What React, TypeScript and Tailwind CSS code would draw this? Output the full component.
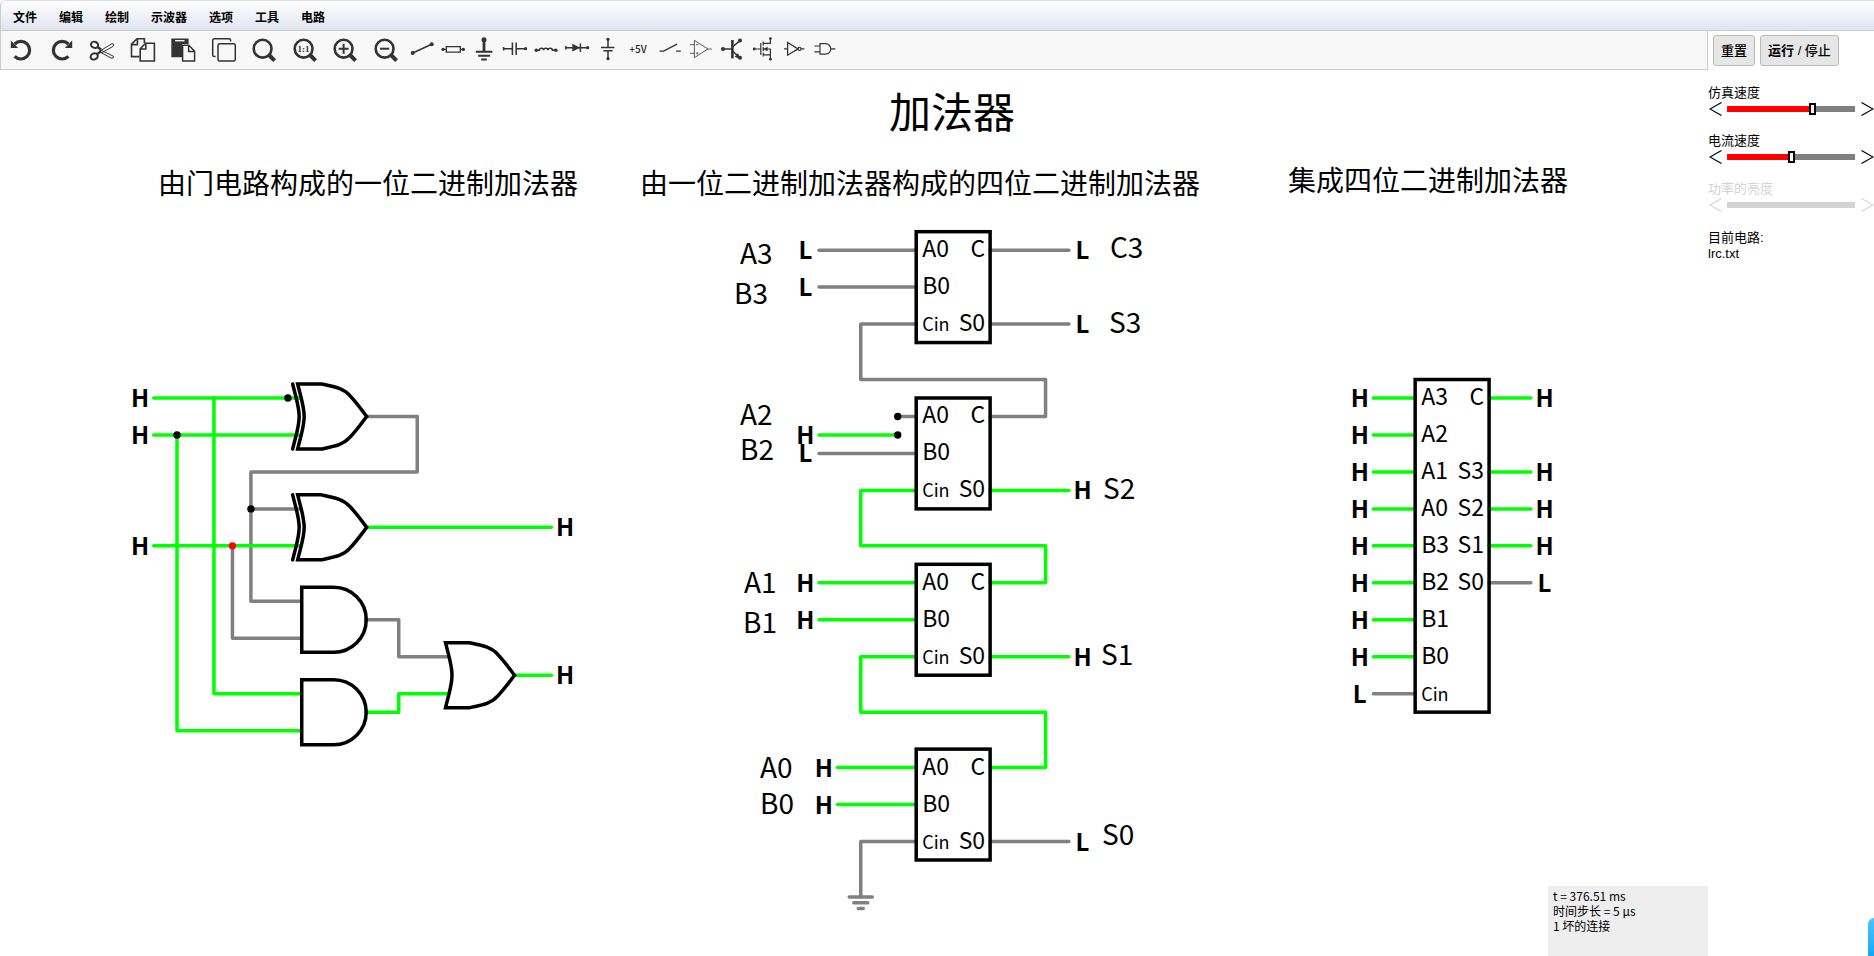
import { useState, type ReactNode } from "react";

const ON = "#00ff00";
const OFF = "#808080";

// grid position -> canvas pixels
const STEP = 18.48;
const gx = (i: number) => 177 + i * STEP;
const gy = (j: number) => 328 + j * STEP;

type Pt = [number, number];

const MENUS = ["文件", "编辑", "绘制", "示波器", "选项", "工具", "电路"];

function Icon({ children }: { children: ReactNode }) {
  return (
    <svg
      width="24"
      height="24"
      viewBox="0 0 24 24"
      className="overflow-visible"
      fill="none"
      stroke="#333333"
      strokeWidth="1.5"
    >
      {children}
    </svg>
  );
}

const Dot = ({ x, y, r = 1.8 }: { x: number; y: number; r?: number }) => (
  <circle cx={x} cy={y} r={r} fill="#333333" stroke="none" />
);

const Lens = () => (
  <>
    <circle cx="10.6" cy="10.7" r="8.9" strokeWidth="2.6" />
    <path d="M17 17L22.6 22.6" strokeWidth="4" />
  </>
);

const EDIT_TOOLS: { name: string; icon: ReactNode }[] = [
  {
    name: "撤销",
    icon: (
      <>
        <path d="M5.6 6A8.8 8.8 0 1 1 5.6 18.4" strokeWidth="3.2" />
        <path d="M1.8 2.5V10H9.2Z" fill="#333333" stroke="none" />
      </>
    ),
  },
  {
    name: "重做",
    icon: (
      <>
        <path d="M18.4 6A8.8 8.8 0 1 0 18.4 18.4" strokeWidth="3.2" />
        <path d="M22.2 2.5V10H14.8Z" fill="#333333" stroke="none" />
      </>
    ),
  },
  {
    name: "剪切",
    icon: (
      <>
        <ellipse cx="4.6" cy="6.8" rx="3.7" ry="3" strokeWidth="2" transform="rotate(20 4.6 6.8)" />
        <ellipse cx="4.2" cy="18.4" rx="3.7" ry="3" strokeWidth="2" transform="rotate(-25 4.2 18.4)" />
        <path d="M7.6 9L11 11.5M7 16L11 13.5" strokeWidth="2.4" />
        <path d="M10 13L22 5.6L24 6.4L23 8.4L12 14.6ZM10 11.6L23.6 18.4L23 20L21 20L10 14Z" strokeWidth="1" />
      </>
    ),
  },
  {
    name: "复制",
    icon: (
      <>
        <path d="M8.5 18.6H.5V6.2L6 .7H13.4V5M6.4 .7V6.6H.5" strokeWidth="1.6" />
        <path d="M9.2 10.8L14.6 5.2H23.4V23H9.2ZM14.8 5.2V11H9.2" strokeWidth="1.6" />
      </>
    ),
  },
  {
    name: "粘贴",
    icon: (
      <>
        <path d="M.3 .5H17.6V6H11V19.3H.3Z" fill="#333333" stroke="none" />
        <path d="M4 2.7H13.5" stroke="#f8f8f8" strokeWidth="1.4" />
        <path d="M11.6 7.2H17.8L23.6 13.2V23.1H11.6ZM17.6 7.2V13.4H23.6" fill="#f8f8f8" />
      </>
    ),
  },
  {
    name: "副本",
    icon: (
      <>
        <path d="M3.6 18.6H2.3A1.6 1.6 0 0 1 .7 17V2.3A1.6 1.6 0 0 1 2.3 .7H17A1.6 1.6 0 0 1 18.6 2.3V3.4" />
        <rect x="6" y="5.8" width="17.3" height="17.3" rx="1.6" />
      </>
    ),
  },
  { name: "搜索", icon: <Lens /> },
  {
    name: "1:1",
    icon: (
      <>
        <Lens />
        <text
          x="10.6"
          y="14"
          textAnchor="middle"
          fill="#333333"
          stroke="none"
          className="font-['Liberation_Serif',serif] text-[9px] font-bold"
        >
          1:1
        </text>
      </>
    ),
  },
  {
    name: "放大",
    icon: (
      <>
        <Lens />
        <path d="M5.6 10.7H15.6M10.6 5.7V15.7" strokeWidth="2" />
      </>
    ),
  },
  {
    name: "缩小",
    icon: (
      <>
        <Lens />
        <path d="M6 10.7H15.2" strokeWidth="2" />
      </>
    ),
  },
];

const PART_TOOLS: { name: string; icon: ReactNode }[] = [
  {
    name: "导线",
    icon: (
      <>
        <path d="M2.7 15L21.7 6.3" />
        <Dot x={2.7} y={15} r={2} />
        <Dot x={21.7} y={6.3} r={2} />
      </>
    ),
  },
  {
    name: "电阻",
    icon: (
      <>
        <path d="M2 11.4H5.3M19.3 11.4H22.6M5.3 8.6H19.3V14.2H5.3Z" strokeWidth="1.3" />
        <Dot x={2} y={11.4} r={1.6} />
        <Dot x={22.4} y={11.4} r={1.6} />
      </>
    ),
  },
  {
    name: "接地",
    icon: (
      <>
        <path d="M12 2V13.6" strokeWidth="2.8" />
        <path d="M3.8 13.7H20.4M6.2 17.8H18M9.2 21.4H14.8" strokeWidth="2" />
        <Dot x={12} y={1.8} r={2.5} />
      </>
    ),
  },
  {
    name: "电容",
    icon: (
      <>
        <path d="M.5 10.7H9.4M13.2 10.7H22.6M9.4 4.4V17M13.2 4.4V17M.6 9V12.4" />
        <Dot x={22.6} y={10.7} r={1.6} />
      </>
    ),
  },
  {
    name: "电感",
    icon: (
      <>
        <path d="M2.3 12.3H5.4C5.4 9.6 9.6 9.6 9.6 12.3C9.6 9.6 14 9.6 14 12.3C14 9.6 18.4 9.6 18.4 12.3H21.6" />
        <Dot x={2.3} y={12.3} r={1.8} />
        <Dot x={21.8} y={12.3} r={1.8} />
      </>
    ),
  },
  {
    name: "二极管",
    icon: (
      <>
        <path d="M.8 9.7H22.6M15.4 5.4V14M.9 8V11.4" />
        <path d="M7.3 5.8L15.3 9.7L7.3 13.6Z" fill="#333333" stroke="none" />
        <Dot x={22.7} y={9.7} r={1.6} />
      </>
    ),
  },
  {
    name: "电池",
    icon: (
      <>
        <path d="M12 1.3V9.6M12 12.7V20.7M5 9.6H18.4M7.4 12.7H16.6" />
        <Dot x={12} y={1.3} r={1.6} />
        <Dot x={12} y={20.7} r={1.6} />
      </>
    ),
  },
  {
    name: "+5V",
    icon: (
      <text x="11" y="15" textAnchor="middle" fill="#222222" stroke="none" className="text-[10px] font-medium">
        +5V
      </text>
    ),
  },
  { name: "开关", icon: <path d="M1.6 13.2H5.6L19 6.2M18.2 13.2H22.8" strokeWidth="1.3" /> },
  {
    name: "运放",
    icon: (
      <>
        <path d="M5.4 2.3V19.7L18.8 11ZM18.8 11H22.8M1 6.7H5.4M1 15.3H5.4M7 6.7H9.4" strokeWidth=".8" />
        <path d="M7 15.3H9.4M8.2 14.1V16.5" strokeWidth=".8" stroke="#8a4a30" />
      </>
    ),
  },
  {
    name: "晶体管",
    icon: (
      <>
        <path d="M3 11H12.4" />
        <path d="M12.4 2V20.4" strokeWidth="2.6" />
        <path d="M12.4 9L20 2.6M12.4 13L20 19.6" />
        <path d="M20.8 21.4L14.6 18.8L18 15.2Z" fill="#333333" stroke="none" />
        <Dot x={3} y={11} r={2} />
        <Dot x={20} y={2.4} r={2} />
        <Dot x={20} y={19.8} r={2} />
      </>
    ),
  },
  {
    name: "场效应管",
    icon: (
      <>
        <path d="M3.7 11H9.8M9.8 5V17M12.2 3.6V7.6M12.2 9V13M12.2 14.6V18.6M12.2 5.4H19.4V.6M12.2 11H19.4V21.2M12.2 16.8H19.4" strokeWidth="1.2" />
        <path d="M12.4 11L16.6 8.8V13.2Z" fill="#333333" stroke="none" />
        <Dot x={3.2} y={11} r={1.4} />
        <Dot x={19.4} y={0.6} r={1.4} />
        <Dot x={19.4} y={21.2} r={1.4} />
      </>
    ),
  },
  {
    name: "反相器",
    icon: (
      <>
        <path d="M5.6 4.4V17.2L16 10.9ZM2 10.9H5.6M19 10.9H22.4" strokeWidth="1.3" />
        <circle cx="17.5" cy="10.9" r="1.5" strokeWidth="1.2" />
      </>
    ),
  },
  {
    name: "与门",
    icon: <path d="M7 5.7H12.6A5.2 5.2 0 0 1 12.6 16.1H7ZM17.8 10.9H22.4M1.4 8H7M1.4 13.8H7" strokeWidth="1.2" />,
  },
];

function Wire({ pts, on = false }: { pts: Pt[]; on?: boolean }) {
  return (
    <polyline
      points={pts.map(([i, j]) => `${gx(i)},${gy(j)}`).join(" ")}
      fill="none"
      stroke={on ? ON : OFF}
      strokeWidth="3.5"
      strokeLinecap="round"
      strokeLinejoin="round"
    />
  );
}

const Node = ({ i, j, bad }: { i: number; j: number; bad?: boolean }) => (
  <circle cx={gx(i)} cy={gy(j)} r="3.7" fill={bad ? "#ff0000" : "#000000"} />
);

function Level({ i, j, v }: { i: number; j: number; v: "H" | "L" }) {
  return (
    <text x={gx(i)} y={gy(j) + 9} textAnchor="middle" className="text-[24px] font-bold">
      {v}
    </text>
  );
}

// logic input or output: letter plus the lead that runs to the grid column `to`
function Terminal({ i, j, v, to }: { i: number; j: number; v: "H" | "L"; to: number }) {
  const gap = to > i ? 0.74 : -0.74;
  return (
    <>
      <Wire pts={[[i + gap, j], [to, j]]} on={v === "H"} />
      <Level i={i} j={j} v={v} />
    </>
  );
}

function OrGate({ i, j, xor }: { i: number; j: number; xor?: boolean }) {
  return (
    <g transform={`translate(${gx(i)} ${gy(j)})`} fill="none" stroke="#000000" strokeWidth="3.5">
      <path d="M0 -32.5H24C38 -29.5 46 -28 52 -21C58 -15 63 -8 69 0C63 8 58 15 52 21C46 28 38 29.5 24 32.5H0C3.5 18 6.5 10 6.5 0C6.5 -10 3.5 -18 0 -32.5Z" />
      {xor && <path d="M-5 -32.5C-1.5 -18 1.5 -10 1.5 0C1.5 10 -1.5 18 -5 32.5" strokeLinecap="round" />}
    </g>
  );
}

function AndGate({ i, j }: { i: number; j: number }) {
  return (
    <path
      transform={`translate(${gx(i)} ${gy(j)})`}
      d="M0 -32.5H32A32.5 32.5 0 0 1 32 32.5H0Z"
      fill="none"
      stroke="#000000"
      strokeWidth="3.5"
    />
  );
}

type Pin = [string, number];

function Chip({ i, j, rows, left, right }: { i: number; j: number; rows: number; left: Pin[]; right: Pin[] }) {
  const size = (s: string) => (s.length > 2 ? "text-[18px]" : "text-[23px]");
  return (
    <g>
      <rect x={gx(i)} y={gy(j)} width={4 * STEP} height={rows * STEP} fill="none" stroke="#000000" strokeWidth="3.5" />
      {left.map(([s, r]) => (
        <text key={s} x={gx(i) + 6} y={gy(j + r) + 7} className={size(s)}>
          {s}
        </text>
      ))}
      {right.map(([s, r]) => (
        <text key={s} x={gx(i + 4) - 5} y={gy(j + r) + 7} textAnchor="end" className={size(s)}>
          {s}
        </text>
      ))}
    </g>
  );
}

const LABELS: [string, number, number][] = [
  ["A3", 740, 194],
  ["B3", 734, 234],
  ["A2", 740, 355],
  ["B2", 740, 390],
  ["A1", 744, 523],
  ["B1", 743, 563],
  ["A0", 760, 708],
  ["B0", 760, 744],
  ["C3", 1110, 188],
  ["S3", 1109, 263],
  ["S2", 1103, 429],
  ["S1", 1101, 595],
  ["S0", 1102, 775],
];

function GateAdder() {
  return (
    <g>
      <Wire pts={[[13, 1], [13, 4], [4, 4], [4, 11], [6.7, 11]]} />
      <Wire pts={[[10.3, 1], [13, 1]]} />
      <Wire pts={[[4, 6], [6.6, 6]]} />
      <Wire pts={[[3, 8], [3, 13], [6.7, 13]]} />
      <Wire pts={[[10.2, 12], [12, 12], [12, 14], [14.7, 14]]} />
      <Wire on pts={[[2, 0], [2, 16], [6.7, 16]]} />
      <Wire on pts={[[0, 2], [0, 18], [6.7, 18]]} />
      <Wire on pts={[[10.2, 17], [12, 17], [12, 16], [14.7, 16]]} />
      <Terminal i={-2} j={0} v="H" to={6.7} />
      <Terminal i={-2} j={2} v="H" to={6.7} />
      <Terminal i={-2} j={8} v="H" to={6.7} />
      <Terminal i={21} j={7} v="H" to={10.3} />
      <Terminal i={21} j={15} v="H" to={18.3} />
      <OrGate i={6.53} j={1} xor />
      <OrGate i={6.53} j={7} xor />
      <AndGate i={6.75} j={12} />
      <AndGate i={6.75} j={17} />
      <OrGate i={14.53} j={15} />
      <Node i={6} j={0} />
      <Node i={0} j={2} />
      <Node i={4} j={6} />
      <Node i={3} j={8} bad />
    </g>
  );
}

function RippleAdder() {
  return (
    <g>
      <Terminal i={34} j={-8} v="L" to={40} />
      <Terminal i={34} j={-6} v="L" to={40} />
      <Terminal i={49} j={-8} v="L" to={44} />
      <Terminal i={49} j={-4} v="L" to={44} />
      <Wire pts={[[40, -4], [37, -4], [37, -1], [47, -1], [47, 1], [44, 1]]} />
      <Wire pts={[[39, 1], [40, 1]]} />
      <Terminal i={34} j={2} v="H" to={39} />
      <Terminal i={34} j={3} v="L" to={40} />
      <Node i={39} j={1} />
      <Node i={39} j={2} />
      <Terminal i={49} j={5} v="H" to={44} />
      <Wire on pts={[[40, 5], [37, 5], [37, 8], [47, 8], [47, 10], [44, 10]]} />
      <Terminal i={34} j={10} v="H" to={40} />
      <Terminal i={34} j={12} v="H" to={40} />
      <Terminal i={49} j={14} v="H" to={44} />
      <Wire on pts={[[40, 14], [37, 14], [37, 17], [47, 17], [47, 20], [44, 20]]} />
      <Terminal i={35} j={20} v="H" to={40} />
      <Terminal i={35} j={22} v="H" to={40} />
      <Terminal i={49} j={24} v="L" to={44} />
      <Wire pts={[[40, 24], [37, 24], [37, 27]]} />
      <path
        transform={`translate(${gx(37)} ${gy(27)})`}
        d="M-11.5 0H11.5M-7 5.8H7M-2.5 11.6H2.5"
        stroke={OFF}
        strokeWidth="3.5"
        strokeLinecap="round"
      />
      {[-9, 0, 9, 19].map((j) => (
        <Chip
          key={j}
          i={40}
          j={j}
          rows={6}
          left={[["A0", 1], ["B0", 3], ["Cin", 5]]}
          right={[["C", 1], ["S0", 5]]}
        />
      ))}
    </g>
  );
}

function ChipAdder() {
  const inputs = ["A3", "A2", "A1", "A0", "B3", "B2", "B1", "B0", "Cin"];
  const outputs: Pin[] = [["C", 1], ["S3", 5], ["S2", 7], ["S1", 9], ["S0", 11]];
  return (
    <g>
      {inputs.map((s, n) => (
        <Terminal key={s} i={64} j={n * 2} v={s === "Cin" ? "L" : "H"} to={67} />
      ))}
      {outputs.map(([s, r]) => (
        <Terminal key={s} i={74} j={r - 1} v={s === "S0" ? "L" : "H"} to={71} />
      ))}
      <Chip i={67} j={-1} rows={18} left={inputs.map((s, n): Pin => [s, n * 2 + 1])} right={outputs} />
    </g>
  );
}

function Slider({ label, initial, disabled }: { label: string; initial: number; disabled?: boolean }) {
  const [value, setValue] = useState(initial);
  const fill = disabled
    ? "#d3d3d3"
    : `linear-gradient(to right, #ff0000 ${value}%, #808080 ${value}%)`;
  const tone = disabled ? "text-[#d3d3d3]" : "text-black";
  const arrow = "flex h-4 w-[19px] shrink-0 items-center";
  return (
    <div className={`h-12 ${tone}`}>
      <label htmlFor={label} className="block h-4 text-[13px] leading-4">
        {label}
      </label>
      <div className="flex h-4 items-center">
        <button type="button" disabled={disabled} aria-label={`${label} -`} className={`${arrow} justify-start pl-px`}>
          <svg width="13" height="14" viewBox="0 0 13 14" fill="none" stroke="currentColor" strokeWidth="1.2">
            <path d="M12.5 .5L1 7L12.5 13.5" />
          </svg>
        </button>
        <input
          id={label}
          type="range"
          min={0}
          max={100}
          value={value}
          disabled={disabled}
          onChange={(e) => setValue(Number(e.target.value))}
          style={{ background: fill }}
          className={`h-[6px] min-w-0 flex-1 appearance-none [&::-webkit-slider-thumb]:h-3 [&::-webkit-slider-thumb]:w-[7px] [&::-webkit-slider-thumb]:appearance-none [&::-webkit-slider-thumb]:border-2 [&::-webkit-slider-thumb]:border-black [&::-webkit-slider-thumb]:bg-white ${
            disabled ? "[&::-webkit-slider-thumb]:invisible" : ""
          }`}
        />
        <button type="button" disabled={disabled} aria-label={`${label} +`} className={`${arrow} justify-end`}>
          <svg width="13" height="14" viewBox="0 0 13 14" fill="none" stroke="currentColor" strokeWidth="1.2">
            <path d="M.5 .5L12 7L.5 13.5" />
          </svg>
        </button>
      </div>
    </div>
  );
}

export default function App() {
  const btn = "h-[31px] rounded-[3px] border border-[#bbbbbb] bg-[#e6e6e6] px-[7px] text-[13px] font-medium";
  return (
    <div className="flex min-h-screen flex-col overflow-hidden bg-white font-['Liberation_Sans','Noto_Sans_CJK_SC',sans-serif] text-black">
      <nav className="flex h-[31px] items-center rounded-tl-md border-t border-b border-l border-t-[#dddddd] border-b-[#cccccc] border-l-[#cccccc] bg-linear-to-b from-white to-[#dfe4f0] pt-1 pl-px">
        {MENUS.map((m) => (
          <button key={m} type="button" className="px-[11px] text-xs font-bold">
            {m}
          </button>
        ))}
      </nav>

      <div className="flex flex-1">
        <main className="flex min-w-0 flex-1 flex-col font-['Noto_Sans_CJK_SC',sans-serif]">
          <div className="flex h-[39px] items-center border-r border-b border-l border-[#cccccc] bg-[#f8f8f8] pl-2">
            <div className="flex w-[389px] shrink-0 justify-between">
              {EDIT_TOOLS.map((t) => (
                <button key={t.name} type="button" title={t.name}>
                  <Icon>{t.icon}</Icon>
                </button>
              ))}
            </div>
            <div className="ml-3 flex gap-[7px]">
              {PART_TOOLS.map((t) => (
                <button key={t.name} type="button" title={t.name}>
                  <Icon>{t.icon}</Icon>
                </button>
              ))}
            </div>
          </div>

          <div className="relative min-h-[880px] flex-1">
            <svg className="absolute inset-0 h-full w-full">
              <text x="952" y="58" textAnchor="middle" className="text-[42px]">
                加法器
              </text>
              <g textAnchor="middle" className="text-[28px]">
                <text x="368" y="124">由门电路构成的一位二进制加法器</text>
                <text x="920" y="124">由一位二进制加法器构成的四位二进制加法器</text>
                <text x="1428" y="121">集成四位二进制加法器</text>
              </g>
              <GateAdder />
              <RippleAdder />
              <ChipAdder />
              {LABELS.map(([s, x, y]) => (
                <text key={s} x={x} y={y} className="text-[28px]">
                  {s}
                </text>
              ))}
            </svg>
            <div className="absolute right-0 bottom-0 h-[70px] w-40 bg-[#eeeeee] px-[5px] pt-[2px] text-xs leading-[15px]">
              <p>t = 376.51 ms</p>
              <p>时间步长 = 5 μs</p>
              <p>1 坏的连接</p>
            </div>
          </div>
        </main>

        <aside className="w-[166px] shrink-0">
          <div className="flex gap-[5px] pt-1 pl-[5px]">
            <button type="button" className={btn}>
              重置
            </button>
            <button type="button" className={btn}>
              <b>运行</b> / 停止
            </button>
          </div>
          <div className="pt-[19px]">
            <Slider label="仿真速度" initial={68} />
            <Slider label="电流速度" initial={50} />
            <Slider label="功率的亮度" initial={0} disabled />
          </div>
          <div className="pt-px text-[13px] leading-4">
            <p>目前电路:</p>
            <p>lrc.txt</p>
          </div>
        </aside>
      </div>

      <div className="fixed right-0 bottom-0 h-[38px] w-[6px] rounded-tl-md bg-linear-to-b from-[#4cc3ff] to-[#0fa8f5]" />
    </div>
  );
}
